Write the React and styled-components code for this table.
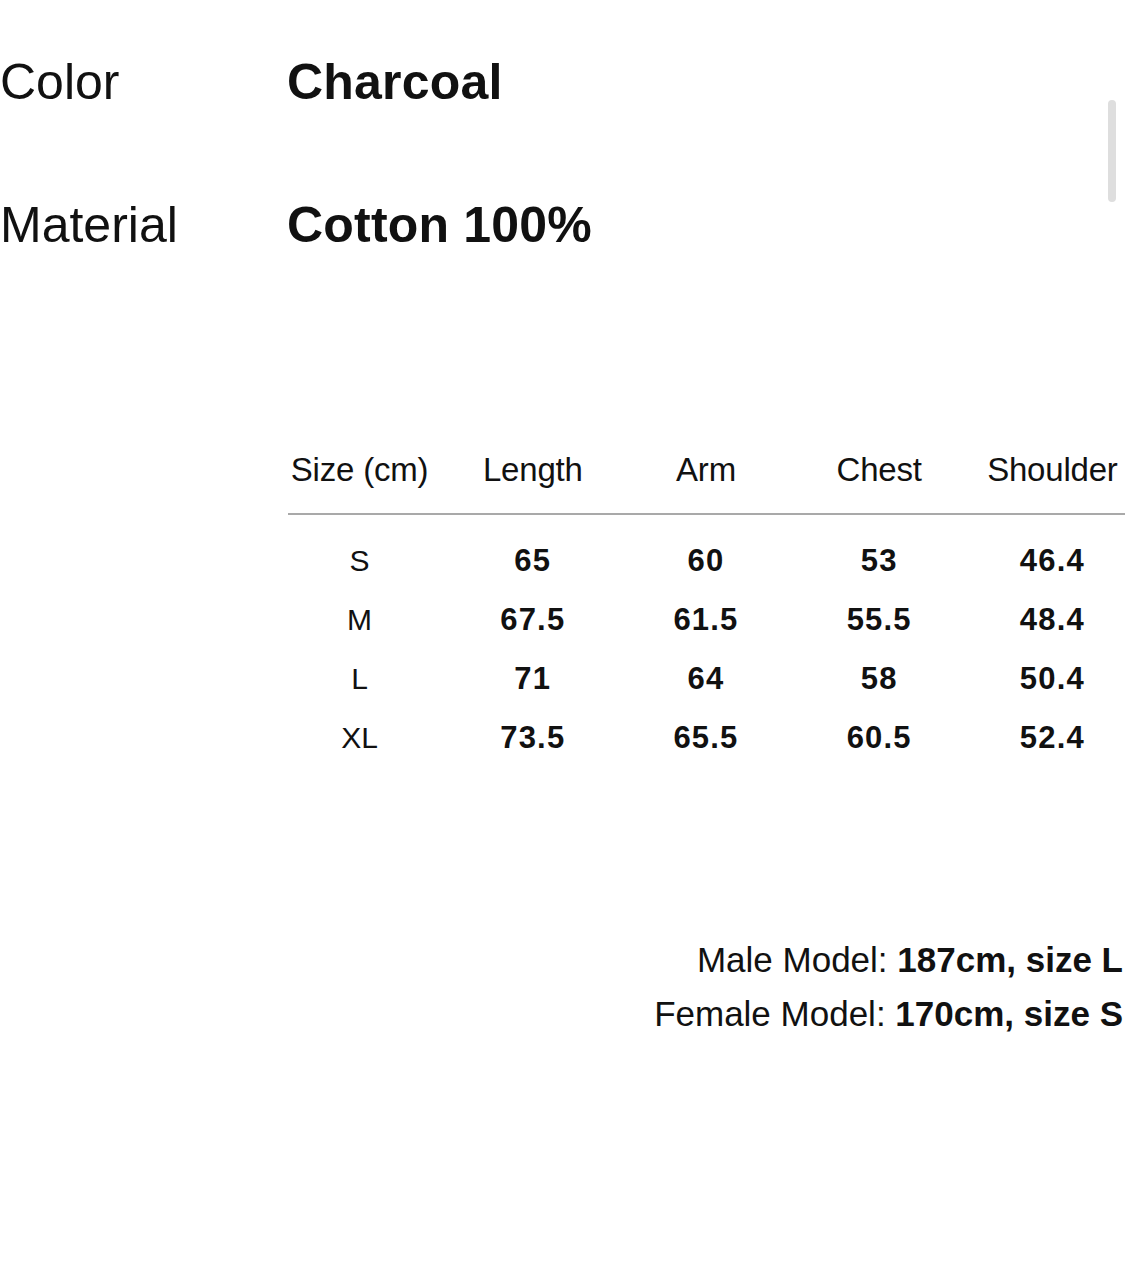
import React from "react";
import styled, { createGlobalStyle } from "styled-components";

const Global = createGlobalStyle`
  html, body {
    margin: 0;
    padding: 0;
    background: #ffffff;
    overflow: hidden;
  }
  body {
    font-family: "Liberation Sans", Arial, Helvetica, sans-serif;
    color: #111111;
  }
`;

const Page = styled.div`
  position: relative;
  width: 1125px;
  min-height: 1273px;
  display: flex;
  flex-direction: column;
`;

const Specs = styled.dl`
  margin: 0;
  padding-top: 52px;
  display: grid;
  grid-template-columns: 287px auto;
  row-gap: 83px;
`;

const SpecLabel = styled.dt`
  margin: 0;
  font-size: 50px;
  line-height: 60px;
  font-weight: 400;
`;

const SpecValue = styled.dd`
  margin: 0;
  font-size: 50px;
  line-height: 60px;
  font-weight: 700;
  letter-spacing: 0.2px;
`;

const Scrollbar = styled.div`
  position: absolute;
  left: 1108px;
  top: 100px;
  width: 8px;
  height: 102px;
  border-radius: 4px;
  background: #dedede;
`;

const Table = styled.div`
  margin-top: 195px;
  margin-left: 273px;
  width: 866px;
  display: flex;
  flex-direction: column;
`;

const Row = styled.div`
  display: grid;
  grid-template-columns: repeat(5, 1fr);
`;

const HeadCell = styled.div`
  text-align: center;
  font-size: 33px;
  line-height: 40px;
  padding-bottom: 23px;
  font-weight: 400;
  letter-spacing: -0.2px;
  white-space: nowrap;
`;

const Rule = styled.div`
  margin-left: 15px;
  height: 2px;
  background: #a9a9a9;
  margin-bottom: 16px;
`;

const Cell = styled.div`
  text-align: center;
  font-size: ${(p) => (p.$label ? "30px" : "31px")};
  font-weight: ${(p) => (p.$label ? 400 : 700)};
  letter-spacing: ${(p) => (p.$label ? "0" : "1.2px")};
  line-height: 59px;
  white-space: nowrap;
`;

const Models = styled.div`
  margin-top: 166px;
  padding-right: 2px;
  display: flex;
  flex-direction: column;
  align-items: flex-end;
`;

const ModelLine = styled.p`
  margin: 0;
  font-size: 35px;
  line-height: 54px;
  white-space: nowrap;

  b {
    font-weight: 700;
  }
`;

const headers = ["Size (cm)", "Length", "Arm", "Chest", "Shoulder"];
const rows = [
  ["S", "65", "60", "53", "46.4"],
  ["M", "67.5", "61.5", "55.5", "48.4"],
  ["L", "71", "64", "58", "50.4"],
  ["XL", "73.5", "65.5", "60.5", "52.4"],
];

export default function App() {
  return (
    <Page>
      <Global />
      <Specs>
        <SpecLabel>Color</SpecLabel>
        <SpecValue>Charcoal</SpecValue>
        <SpecLabel>Material</SpecLabel>
        <SpecValue>Cotton 100%</SpecValue>
      </Specs>
      <Scrollbar />
      <Table>
        <Row>
          {headers.map((h) => (
            <HeadCell key={h}>{h}</HeadCell>
          ))}
        </Row>
        <Rule />
        {rows.map((r) => (
          <Row key={r[0]}>
            {r.map((v, i) => (
              <Cell key={i} $label={i === 0}>
                {v}
              </Cell>
            ))}
          </Row>
        ))}
      </Table>
      <Models>
        <ModelLine>
          Male Model: <b>187cm, size L</b>
        </ModelLine>
        <ModelLine>
          Female Model: <b>170cm, size S</b>
        </ModelLine>
      </Models>
    </Page>
  );
}
